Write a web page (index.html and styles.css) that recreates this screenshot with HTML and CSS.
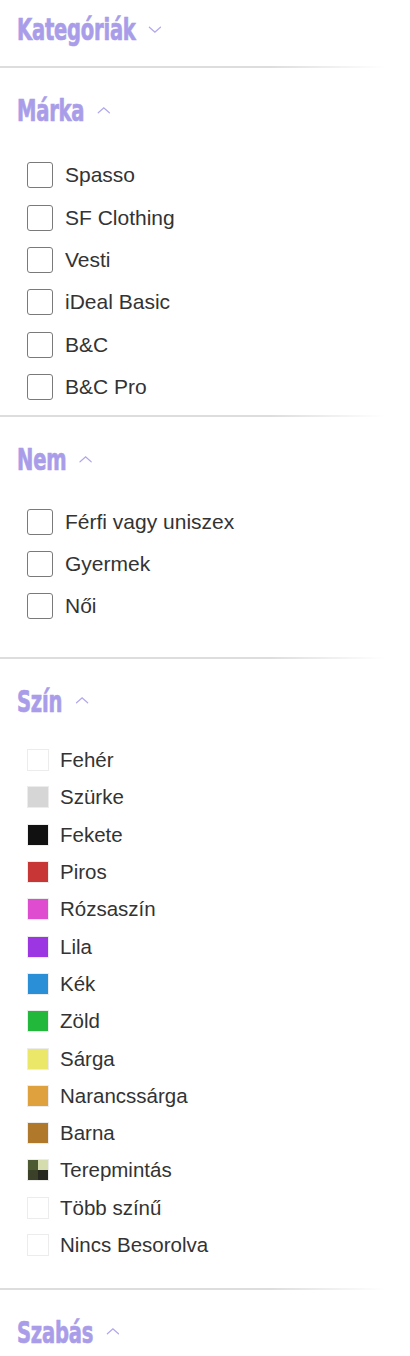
FILE: index.html
```html
<!DOCTYPE html>
<html lang="hu">
<head>
    <meta charset="UTF-8">
    <meta name="viewport" content="width=device-width, initial-scale=1.0">
    <title>Szűrők</title>
    <link rel="stylesheet" href="styles.css">
</head>
<body>
    <div class="szurok">
        <div class="szuro szuro-csukott">
            <h3 class="szuro-cim">Kategóriák
                <svg class="nyil" viewBox="0 0 14 8" preserveAspectRatio="none"><path d="M1 1l6 6 6-6"/></svg>
            </h3>
        </div>

        <div class="szuro szuro-marka">
            <h3 class="szuro-cim">Márka
                <svg class="nyil" viewBox="0 0 14 8" preserveAspectRatio="none"><path d="M1 7l6-6 6 6"/></svg>
            </h3>
            <ul class="pipa-lista">
                <li><label><input type="checkbox"> Spasso</label></li>
                <li><label><input type="checkbox"> SF Clothing</label></li>
                <li><label><input type="checkbox"> Vesti</label></li>
                <li><label><input type="checkbox"> iDeal Basic</label></li>
                <li><label><input type="checkbox"> B&amp;C</label></li>
                <li><label><input type="checkbox"> B&amp;C Pro</label></li>
            </ul>
        </div>

        <div class="szuro szuro-nem">
            <h3 class="szuro-cim">Nem
                <svg class="nyil" viewBox="0 0 14 8" preserveAspectRatio="none"><path d="M1 7l6-6 6 6"/></svg>
            </h3>
            <ul class="pipa-lista">
                <li><label><input type="checkbox"> Férfi vagy uniszex</label></li>
                <li><label><input type="checkbox"> Gyermek</label></li>
                <li><label><input type="checkbox"> Női</label></li>
            </ul>
        </div>

        <div class="szuro szuro-szin">
            <h3 class="szuro-cim">Szín
                <svg class="nyil" viewBox="0 0 14 8" preserveAspectRatio="none"><path d="M1 7l6-6 6 6"/></svg>
            </h3>
            <ul class="szin-lista">
                <li><span class="minta feher"></span>Fehér</li>
                <li><span class="minta szurke"></span>Szürke</li>
                <li><span class="minta fekete"></span>Fekete</li>
                <li><span class="minta piros"></span>Piros</li>
                <li><span class="minta rozsa"></span>Rózsaszín</li>
                <li><span class="minta lila"></span>Lila</li>
                <li><span class="minta kek"></span>Kék</li>
                <li><span class="minta zold"></span>Zöld</li>
                <li><span class="minta sarga"></span>Sárga</li>
                <li><span class="minta narancs"></span>Narancssárga</li>
                <li><span class="minta barna"></span>Barna</li>
                <li><span class="minta terep"></span>Terepmintás</li>
                <li><span class="minta feher"></span>Több színű</li>
                <li><span class="minta feher"></span>Nincs Besorolva</li>
            </ul>
        </div>

        <div class="szuro szuro-utolso">
            <h3 class="szuro-cim">Szabás
                <svg class="nyil" viewBox="0 0 14 8" preserveAspectRatio="none"><path d="M1 7l6-6 6 6"/></svg>
            </h3>
        </div>
    </div>
</body>
</html>
```

FILE: styles.css
```css
body {
    margin: 0;
    font-family: "Liberation Sans", Arial, sans-serif;
    color: #333;
    background: #fff;
}

.szurok {
    width: 410px;
}

.szuro {
    position: relative;
    padding: 22px 0 0 17px;
}

/* elvalaszto vonal, jobb oldalon elhalvanyul */
.szuro::after {
    content: "";
    position: absolute;
    left: 0;
    bottom: 0;
    width: 385px;
    height: 2px;
    background: linear-gradient(to right, #dddddd 70%, rgba(230, 230, 230, 0));
}

.szuro-utolso::after {
    display: none;
}

.szuro-csukott {
    padding-top: 9px;
    padding-bottom: 19px;
}

.szuro-marka {
    padding-bottom: 9px;
}

.szuro-nem {
    padding-bottom: 31px;
}

.szuro-szin {
    padding-bottom: 26px;
}

.szuro-cim {
    margin: 0;
    height: 40px;
    display: flex;
    align-items: center;
    font-family: "Liberation Sans Narrow", "DejaVu Sans Condensed", sans-serif;
    font-weight: bold;
    font-size: 31px;
    letter-spacing: -0.3px;
    color: #a99de9;
    -webkit-text-stroke: 0.7px #a99de9;
    transform: scaleX(0.7);
    transform-origin: left center;
}

.nyil {
    width: 20px;
    height: 7px;
    margin-left: 18px;
    fill: none;
    stroke: #b1a8ec;
    stroke-width: 1.3;
}

.nyil path {
    vector-effect: non-scaling-stroke;
}

.pipa-lista,
.szin-lista {
    list-style: none;
    margin: 0;
    padding: 0 0 0 10px;
}

.szuro-marka .pipa-lista {
    margin-top: 24px;
}

.szuro-nem .pipa-lista {
    margin-top: 21px;
}

.pipa-lista li {
    height: 42.4px;
    display: flex;
    align-items: center;
}

.pipa-lista label {
    display: flex;
    align-items: center;
    gap: 12px;
    font-size: 21px;
    color: #333;
}

.pipa-lista input {
    appearance: none;
    -webkit-appearance: none;
    margin: 0;
    width: 26px;
    height: 26px;
    border: 1.5px solid #7a7a7a;
    border-radius: 3px;
    background: #fff;
}

.szin-lista {
    margin-top: 21px;
}

.szin-lista li {
    height: 37.3px;
    display: flex;
    align-items: center;
    font-size: 20.5px;
    color: #333;
}

.minta {
    width: 20px;
    height: 20px;
    border: 1px solid #ececec;
    margin-right: 11px;
    flex-shrink: 0;
}

.feher { background: #fff; }
.szurke { background: #d6d6d6; }
.fekete { background: #111; border-color: #eee; }
.piros { background: #c93636; }
.rozsa { background: #df4ccf; }
.lila { background: #9b36e2; }
.kek { background: #2a8fd7; }
.zold { background: #21b83b; }
.sarga { background: #ebe769; }
.narancs { background: #dea13d; }
.barna { background: #b0782b; }
.terep {
    background:
        linear-gradient(#4c5b32, #4c5b32) 0 0 / 50% 50% no-repeat,
        linear-gradient(#d5dcae, #d5dcae) 100% 0 / 50% 50% no-repeat,
        linear-gradient(#3b4129, #3b4129) 0 100% / 50% 50% no-repeat,
        linear-gradient(#26271f, #26271f) 100% 100% / 50% 50% no-repeat;
}
```
